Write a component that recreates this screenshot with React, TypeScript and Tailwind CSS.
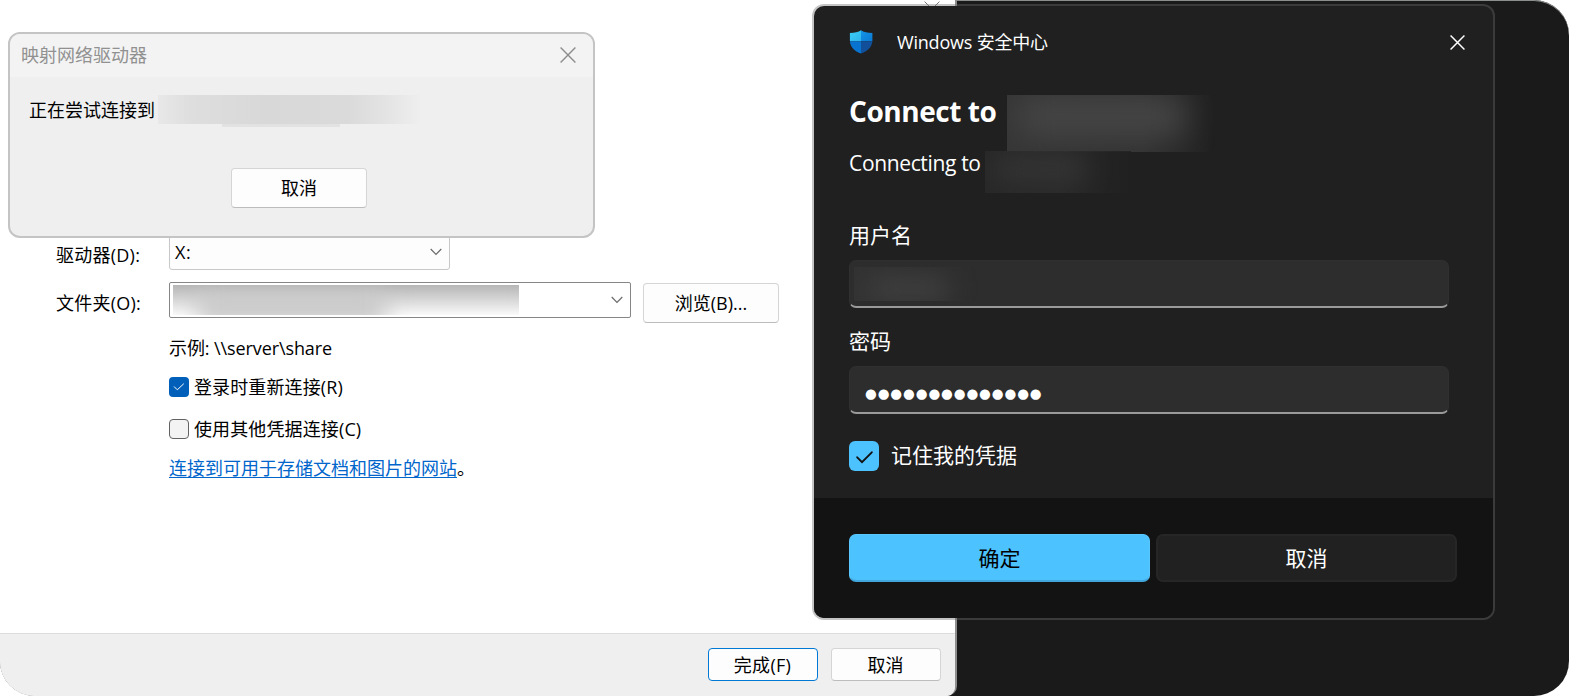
import React from 'react';

interface LabelProps {
  children: React.ReactNode;
  className?: string;
}

const CloseIcon = ({ className }: { className: string }) => (
  <svg viewBox="0 0 16 16" fill="none" stroke="currentColor" className={className}>
    <path d="M0.6 0.6 15.4 15.4M15.4 0.6 0.6 15.4" />
  </svg>
);

const ChevronIcon = () => (
  <svg width="12" height="8" viewBox="0 0 12 8" fill="none" stroke="#6a6a6a" strokeWidth="1.2">
    <path d="M0.7 1 6 6.3 11.3 1" />
  </svg>
);

const ShieldIcon = () => (
  <svg width="24" height="24" viewBox="0 0 24 24">
    <defs>
      <clipPath id="shield">
        <path d="M12 0.3C14.5 2 18.5 3 23.4 3V10.5C23.4 17.5 17.5 21.8 12 23.4 6.5 21.8 0.9 17.5 0.9 10.5V3C5.5 3 9.5 2 12 0.3Z" />
      </clipPath>
      <linearGradient id="shield-left" x1="0" y1="0" x2="1" y2="1">
        <stop offset="0" stopColor="#3bd0f8" />
        <stop offset="1" stopColor="#2fb2ea" />
      </linearGradient>
      <linearGradient id="shield-right" x1="0" y1="0" x2="1" y2="1">
        <stop offset="0" stopColor="#1496e8" />
        <stop offset="1" stopColor="#0a78d2" />
      </linearGradient>
    </defs>
    <g clipPath="url(#shield)">
      <rect width="12" height="11.3" fill="url(#shield-left)" />
      <rect x="12" width="12" height="11.3" fill="url(#shield-right)" />
      <rect y="11.3" width="12" height="13" fill="#0874d0" />
      <rect x="12" y="11.3" width="12" height="13" fill="#114f9a" />
    </g>
  </svg>
);

const LightButton = ({ children, className = '' }: LabelProps) => (
  <button
    className={`flex items-center justify-center rounded border border-[#d5d5d5] border-b-[#bcbcbc] bg-[#fdfdfd] text-lg leading-none ${className}`}
  >
    {children}
  </button>
);

const DriveWizard = () => (
  <div className="absolute left-0 top-0 flex h-[696px] w-[957px] flex-col overflow-hidden rounded-br-[10px] border-r-2 border-[#8e8e8e] bg-white text-lg leading-6 text-black">
    <div className="h-[633px] pt-[234px]">
      <div className="flex h-9">
        <div className="w-[169px] pl-14 pt-[9px]">
          <span className="tracking-[0.25px]">驱动器(D):</span>
        </div>
        <div className="flex w-[281px] items-center justify-between rounded-[3px] border border-[#c8c8c8] bg-[#fdfdfd] pl-[5px] pr-[7px]">
          <span className="tracking-[0.6px]">X:</span>
          <ChevronIcon />
        </div>
      </div>
      <div className="mt-3 flex h-[41px]">
        <div className="w-[169px] pl-14 pt-[9px]">
          <span className="tracking-[0.25px]">文件夹(O):</span>
        </div>
        <div className="flex h-9 w-[462px] items-center justify-between rounded-[2px] border border-[#868686] bg-white pl-[3px] pr-[7px]">
          <div className="h-[30px] w-[346px] overflow-hidden bg-gradient-to-b from-[#b6b6b6] to-[#fafafa]">
            <div className="ml-6 mt-2 h-8 w-[190px] bg-[#c6c6c6] blur-[12px]"></div>
          </div>
          <ChevronIcon />
        </div>
        <LightButton className="ml-3 mt-px h-10 w-[136px]">浏览(B)...</LightButton>
      </div>
      <div className="pl-[169px]">
        <div className="mt-[13px] h-6 tracking-[-0.1px]">示例: \\server\share</div>
        <div className="mt-[15px] flex h-6 items-center gap-[5px]">
          <div className="flex h-5 w-5 items-center justify-center rounded-[4px] bg-[#005fb8]">
            <svg width="12" height="8" viewBox="0 0 12 8" fill="none" stroke="#fff" strokeWidth="1">
              <path d="M1 3.5 4.3 6.8 10.8 0.7" />
            </svg>
          </div>
          <span className="tracking-[0.12px]">登录时重新连接(R)</span>
        </div>
        <div className="mt-[18px] flex h-6 items-center gap-[5px]">
          <div className="h-5 w-5 rounded-[4px] border border-[#626262] bg-[#f3f3f3]"></div>
          <span className="tracking-[0.12px]">使用其他凭据连接(C)</span>
        </div>
        <div className="mt-[15px] h-6">
          <span className="text-[#0066cc] underline decoration-1 underline-offset-[2px]">连接到可用于存储文档和图片的网站</span>。
        </div>
      </div>
    </div>
    <div className="flex h-[63px] justify-end gap-[13px] border-t border-[#dddddd] bg-[#efefef] pr-[14.5px] pt-[14px]">
      <button className="flex h-[33px] w-[110px] items-center justify-center rounded border border-[#0078d4] bg-[#fdfdfd] text-lg leading-none tracking-[0.3px]">
        完成(F)
      </button>
      <LightButton className="h-[33px] w-[110px]">取消</LightButton>
    </div>
  </div>
);

const ConnectingDialog = () => (
  <div className="absolute left-2 top-8 h-[206px] w-[587px] overflow-hidden rounded-[12px] border-2 border-[#c4c4c4] bg-[#efefef] text-lg leading-6 text-black">
    <div className="flex h-[43px] items-center justify-between bg-[#f3f3f3] pb-[2px] pl-[11px] pr-[17px] text-[#919191]">
      <span>映射网络驱动器</span>
      <CloseIcon className="h-4 w-4 stroke-[1.4] text-[#8c8c8c]" />
    </div>
    <div className="flex h-[50px] pl-[19px] pt-[18px]">
      <span className="pt-[3px]">正在尝试连接到</span>
      <div className="ml-[3px]">
        <div className="h-[29px] w-[272px] bg-linear-[to_right,#e8e8e8,#dedede_12%,#d8d8d8_40%,#dadada_70%,#e3e3e3_83%,#efefef_97%]"></div>
        <div className="ml-16 h-[3px] w-[118px] bg-[#e2e2e2]"></div>
      </div>
    </div>
    <div className="flex pl-[221px] pt-[41px]">
      <LightButton className="h-10 w-[136px]">取消</LightButton>
    </div>
  </div>
);

const SecurityDialog = () => (
  <div className="absolute left-[814px] top-[6px] flex h-[612px] w-[679px] flex-col overflow-hidden rounded-[10px] bg-[#202020] text-[21px] leading-7 text-white shadow-[0_0_0_2px_rgba(110,110,110,0.4)]">
    <div className="h-[492px] px-[35px] pt-[22px]">
      <div className="flex h-7 items-center">
        <ShieldIcon />
        <span className="ml-6 flex-1 text-lg tracking-[-0.2px]">Windows 安全中心</span>
        <CloseIcon className="mr-[-7px] h-[15px] w-[15px] stroke-[1.6]" />
      </div>
      <div className="mt-[39px] flex h-[55px]">
        <h1 className="-mt-[2px] h-9 w-[158px] whitespace-nowrap text-[28px] font-bold leading-9 tracking-[-0.45px]">
          Connect to
        </h1>
        <div className="h-[57px] w-[208px] overflow-hidden bg-linear-[to_right,#363636,#343434_65%,#202020]">
          <div className="ml-3 mt-1 h-9 w-[165px] bg-[#464646] blur-[15px]"></div>
        </div>
      </div>
      <div className="flex h-[43px]">
        <p className="-mt-px w-[136px] whitespace-nowrap tracking-[-0.35px]">Connecting to</p>
        <div className="mt-px h-[42px] w-[146px] overflow-hidden bg-linear-[to_right,#282828,#2a2a2a_50%,#202020]">
          <div className="ml-3 mt-2 h-5 w-[88px] bg-[#363636] blur-[12px]"></div>
        </div>
      </div>
      <label className="mt-[28px] block h-7">用户名</label>
      <div className="mt-[11px] h-12 w-[600px] overflow-hidden rounded-[7px] border border-b-2 border-[#303030] border-b-[#9a9a9a] bg-[#2d2d2d] pl-1 pt-[6px]">
        <div className="h-[34px] w-[124px] overflow-hidden bg-gradient-to-r from-[#323232] to-[#2d2d2d]">
          <div className="ml-4 mt-3 h-5 w-[78px] bg-[#434343] blur-[13px]"></div>
        </div>
      </div>
      <label className="mt-[19px] block h-7">密码</label>
      <div className="mt-[11px] flex h-12 w-[600px] items-center rounded-[7px] border border-b-2 border-[#303030] border-b-[#9a9a9a] bg-[#2d2d2d] pl-[15px] pt-[8px]">
        <span className="font-['DejaVu_Sans'] text-[13.5px] leading-none tracking-[0.9px]">●●●●●●●●●●●●●●</span>
      </div>
      <div className="mt-[27px] flex h-[30px] items-center gap-3">
        <div className="flex h-[30px] w-[30px] items-center justify-center rounded-[6px] bg-[#4cc2ff]">
          <svg width="17" height="13" viewBox="0 0 17 13" fill="none" stroke="#111" strokeWidth="1.9" strokeLinecap="round" className="mt-[3px]">
            <path d="M1.2 6.3 6 11.2 15.8 1.3" />
          </svg>
        </div>
        <span className="-mt-[3px]">记住我的凭据</span>
      </div>
    </div>
    <div className="flex h-[120px] gap-[6px] bg-[#131313] px-[35px] pt-9">
      <button className="flex h-12 w-[301px] items-center justify-center rounded-[7px] border border-b-2 border-[#5ac7ff] border-b-[#42a6dc] bg-[#4cc2ff] text-black">
        确定
      </button>
      <button className="flex h-12 w-[301px] items-center justify-center rounded-[7px] border-2 border-[#262626] bg-[#212121]">
        取消
      </button>
    </div>
  </div>
);

const App = () => {
  return (
    <div className="h-[696px] w-[1569px] overflow-hidden bg-white font-['Open_Sans','Noto_Sans_CJK_SC',sans-serif]">
      <div className="relative h-full w-full overflow-hidden rounded-[35px] rounded-tl-none bg-[#1a1a1a] shadow-[inset_0_1px_0_#8b8f8c]">
        <DriveWizard />
        <CloseIcon className="absolute left-[924px] top-[1px] h-4 w-4 text-[#777777]" />
        <ConnectingDialog />
        <SecurityDialog />
      </div>
    </div>
  );
};

export default App;
